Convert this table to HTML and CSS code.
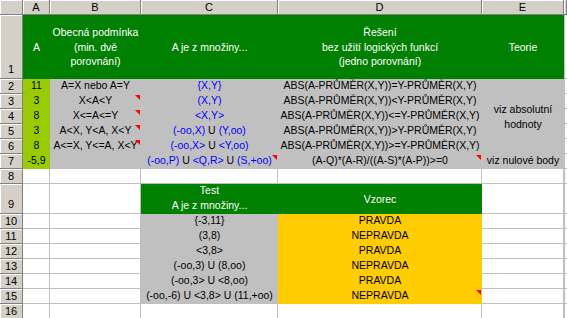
FILE: index.html
```html
<!DOCTYPE html>
<html lang="cs">
<head>
<meta charset="utf-8">
<title>Sheet</title>
<link rel="stylesheet" href="styles.css">
</head>
<body>
<div class="sheet">
  <div class="corner"></div>
  <div class="ch">A</div>
  <div class="ch">B</div>
  <div class="ch">C</div>
  <div class="ch">D</div>
  <div class="ch">E</div>
  <div class="ch"></div>

  <div class="rh bot">1</div>
  <div class="g">A</div>
  <div class="g">Obecná podmínka<br>(min. dvě<br>porovnání)</div>
  <div class="g">A je z množiny...</div>
  <div class="g">Řešení<br>bez užití logických funkcí<br>(jedno porovnání)</div>
  <div class="g">Teorie</div>
  <div class="c f"></div>

  <div class="rh">2</div>
  <div class="lm">11</div>
  <div class="gr">A=X nebo A=Y</div>
  <div class="gr bl">{X,Y}</div>
  <div class="gr">ABS(A-PRŮMĚR(X,Y))=Y-PRŮMĚR(X,Y)</div>
  <div class="gr theory">viz absolutní<br>hodnoty</div>
  <div class="c f"></div>

  <div class="rh">3</div>
  <div class="lm">3</div>
  <div class="gr cm">X&lt;A&lt;Y</div>
  <div class="gr bl">(X,Y)</div>
  <div class="gr">ABS(A-PRŮMĚR(X,Y))&lt;Y-PRŮMĚR(X,Y)</div>
  <div class="c f"></div>

  <div class="rh">4</div>
  <div class="lm">8</div>
  <div class="gr cm">X&lt;=A&lt;=Y</div>
  <div class="gr bl">&lt;X,Y&gt;</div>
  <div class="gr">ABS(A-PRŮMĚR(X,Y))&lt;=Y-PRŮMĚR(X,Y)</div>
  <div class="c f"></div>

  <div class="rh">5</div>
  <div class="lm">3</div>
  <div class="gr cm">A&lt;X, Y&lt;A, X&lt;Y</div>
  <div class="gr"><span><span class="blue">(-oo,X)</span> U <span class="blue">(Y,oo)</span></span></div>
  <div class="gr">ABS(A-PRŮMĚR(X,Y))&gt;Y-PRŮMĚR(X,Y)</div>
  <div class="c f"></div>

  <div class="rh">6</div>
  <div class="lm">8</div>
  <div class="gr cm">A&lt;=X, Y&lt;=A, X&lt;Y</div>
  <div class="gr"><span><span class="blue">(-oo,X&gt;</span> U <span class="blue">&lt;Y,oo)</span></span></div>
  <div class="gr">ABS(A-PRŮMĚR(X,Y))&gt;=Y-PRŮMĚR(X,Y)</div>
  <div class="c f"></div>

  <div class="rh">7</div>
  <div class="lm">-5,9</div>
  <div class="gr"></div>
  <div class="gr cm"><span><span class="blue">(-oo,P)</span> U <span class="blue">&lt;Q,R&gt;</span> U <span class="blue">(S,+oo)</span></span></div>
  <div class="gr cm">(A-Q)*(A-R)/((A-S)*(A-P))&gt;=0</div>
  <div class="gr">viz nulové body</div>
  <div class="c f"></div>

  <div class="rh">8</div>
  <div class="c"></div>
  <div class="c"></div>
  <div class="c"></div>
  <div class="c"></div>
  <div class="c"></div>
  <div class="c f"></div>

  <div class="rh bot">9</div>
  <div class="c"></div>
  <div class="c"></div>
  <div class="g gb">Test<br>A je z množiny...</div>
  <div class="g">Vzorec</div>
  <div class="c"></div>
  <div class="c f"></div>

  <div class="rh">10</div>
  <div class="c"></div>
  <div class="c"></div>
  <div class="gr">{-3,11}</div>
  <div class="yl">PRAVDA</div>
  <div class="c"></div>
  <div class="c f"></div>

  <div class="rh">11</div>
  <div class="c"></div>
  <div class="c"></div>
  <div class="gr">(3,8)</div>
  <div class="yl">NEPRAVDA</div>
  <div class="c"></div>
  <div class="c f"></div>

  <div class="rh">12</div>
  <div class="c"></div>
  <div class="c"></div>
  <div class="gr">&lt;3,8&gt;</div>
  <div class="yl">PRAVDA</div>
  <div class="c"></div>
  <div class="c f"></div>

  <div class="rh">13</div>
  <div class="c"></div>
  <div class="c"></div>
  <div class="gr">(-oo,3) U (8,oo)</div>
  <div class="yl">NEPRAVDA</div>
  <div class="c"></div>
  <div class="c f"></div>

  <div class="rh">14</div>
  <div class="c"></div>
  <div class="c"></div>
  <div class="gr">(-oo,3&gt; U &lt;8,oo)</div>
  <div class="yl">PRAVDA</div>
  <div class="c"></div>
  <div class="c f"></div>

  <div class="rh">15</div>
  <div class="c"></div>
  <div class="c"></div>
  <div class="gr">(-oo,-6) U &lt;3,8&gt; U (11,+oo)</div>
  <div class="yl cm">NEPRAVDA</div>
  <div class="c"></div>
  <div class="c f"></div>

  <div class="rh">16</div>
  <div class="c"></div>
  <div class="c"></div>
  <div class="c"></div>
  <div class="c"></div>
  <div class="c"></div>
  <div class="c f"></div>
</div>
</body>
</html>
```

FILE: styles.css
```css
html, body {
  margin: 0;
  padding: 0;
  background: #ffffff;
}

body {
  font-family: "Liberation Sans", Arial, sans-serif;
  font-size: 10.5px;
  color: #000000;
}

.sheet {
  display: grid;
  grid-template-columns: 23px 27px 91px 137px 204px 82px 3px;
  grid-template-rows: 15px 64px repeat(7, 15px) 30px repeat(8, 15px);
  width: 567px;
  height: 318px;
  overflow: hidden;
}

.sheet > div {
  box-sizing: border-box;
  display: flex;
  align-items: flex-end;
  justify-content: center;
  text-align: center;
  white-space: nowrap;
  line-height: 15px;
  min-width: 0;
  padding-bottom: 1px;
}

.corner,
.ch,
.rh {
  background: #d4d0c8;
  border-right: 1px solid #808080;
  border-bottom: 1px solid #808080;
  box-shadow: inset 1px 1px 0 #ffffff;
  font-size: 11px;
}

.sheet > .ch,
.sheet > .rh {
  align-items: center;
  padding-bottom: 0;
}

.sheet > .rh.bot {
  align-items: flex-end;
  padding-bottom: 1px;
}

.c {
  border-right: 1px solid #c0c0c0;
  border-bottom: 1px solid #c0c0c0;
}

.sheet > .f {
  border-right: none;
  border-left: 1px solid #c0c0c0;
}

.sheet > .g {
  background: #008000;
  color: #ffffff;
  align-items: center;
  line-height: 14.5px;
  padding-bottom: 0;
}

.sheet > .g.gb {
  align-items: flex-end;
  padding-bottom: 2px;
}

.gr {
  background: #c0c0c0;
}

.lm {
  background: #99cc00;
}

.yl {
  background: #ffcc00;
}

.bl,
.blue {
  color: #0000ff;
}

.sheet > .theory {
  grid-row: span 5;
  align-items: center;
  line-height: 15px;
  padding-bottom: 0;
}

.cm {
  position: relative;
}

.cm::after {
  content: "";
  position: absolute;
  top: 1px;
  right: 1px;
  width: 0;
  height: 0;
  border-top: 5px solid #ff0000;
  border-left: 5px solid transparent;
}
```
